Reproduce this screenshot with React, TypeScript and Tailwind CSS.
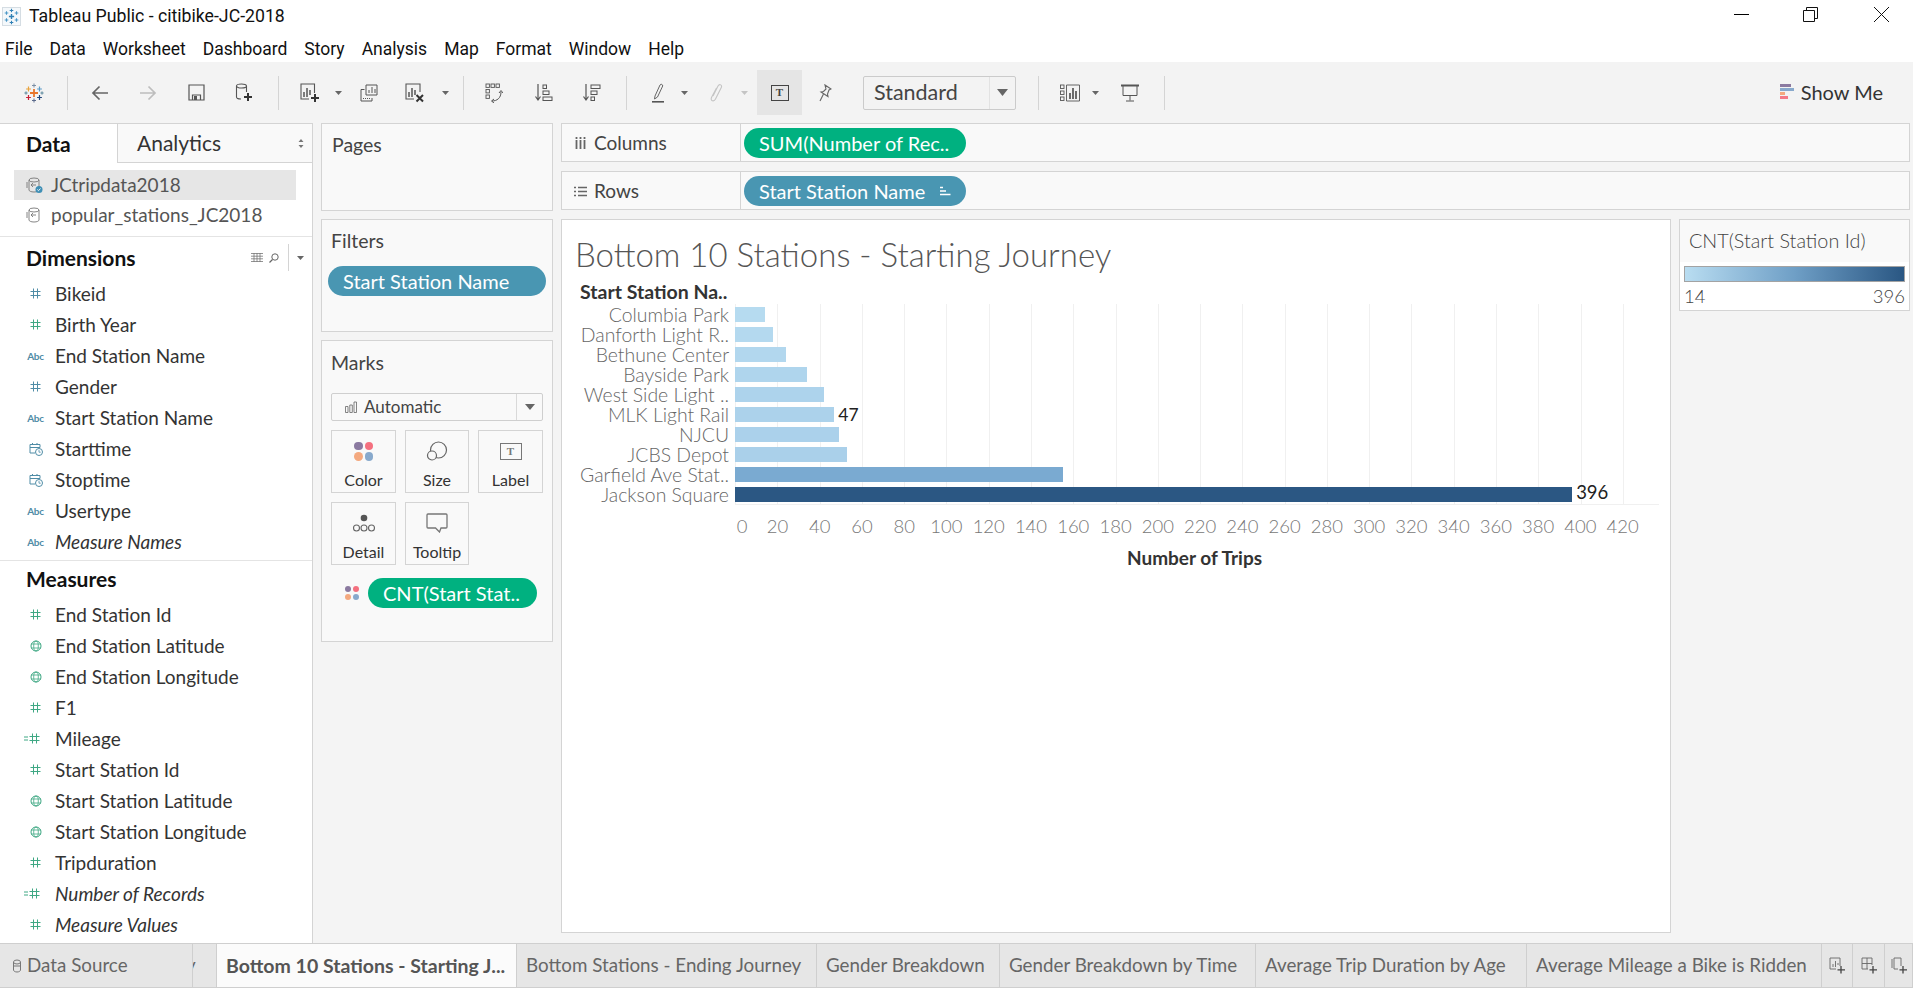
import React from "react";

const S = "#555555";

function Svg({ w = 20, h = 20, children, className = "" }: { w?: number; h?: number; children: React.ReactNode; className?: string }) {
  return (
    <svg width={w} height={h} viewBox={`0 0 ${w} ${h}`} fill="none" className={className}>
      {children}
    </svg>
  );
}

function Plus({ x, y, r, c, t = 1.4 }: { x: number; y: number; r: number; c: string; t?: number }) {
  return <path d={`M${x - r} ${y}H${x + r}M${x} ${y - r}V${y + r}`} stroke={c} strokeWidth={t} />;
}

function TableauLogo() {
  return (
    <Svg w={20} h={20}>
      <Plus x={10} y={10} r={4} c="#e8762c" t={1.8} />
      <Plus x={10} y={2.5} r={2} c="#7b8fa6" t={1} />
      <Plus x={10} y={17.5} r={2} c="#5b6b8c" t={1} />
      <Plus x={4.5} y={6} r={2.4} c="#e8a33d" t={1.2} />
      <Plus x={15.5} y={6} r={2.4} c="#5b9bc8" t={1.2} />
      <Plus x={4.5} y={14.5} r={2.4} c="#c72035" t={1.2} />
      <Plus x={15.5} y={14.5} r={2.4} c="#1f447a" t={1.2} />
      <Plus x={2} y={10} r={1.6} c="#59879b" t={1} />
      <Plus x={18} y={10} r={1.6} c="#59879b" t={1} />
    </Svg>
  );
}

function AppIcon() {
  return (
    <div className="w-[19px] h-[19px] bg-[#f4f8fb] border border-[#d5dde3] flex items-center justify-center">
      <Svg w={17} h={17}>
        <Plus x={8.5} y={8.5} r={2.6} c="#2f80b5" />
        <Plus x={8.5} y={2.5} r={1.8} c="#2f80b5" t={1.1} />
        <Plus x={8.5} y={14.5} r={1.8} c="#2f80b5" t={1.1} />
        <Plus x={3.5} y={5} r={1.8} c="#4b97c7" t={1.1} />
        <Plus x={13.5} y={5} r={1.8} c="#4b97c7" t={1.1} />
        <Plus x={3.5} y={12} r={1.8} c="#4b97c7" t={1.1} />
        <Plus x={13.5} y={12} r={1.8} c="#4b97c7" t={1.1} />
      </Svg>
    </div>
  );
}

const Caret = ({ c = "#666" }: { c?: string }) => (
  <Svg w={7} h={4}>
    <path d="M0 0H7L3.5 4Z" fill={c} />
  </Svg>
);

const Sep = () => <div className="w-px h-[34px] bg-[#d4d4d4] shrink-0" />;

function Slot({ w, children }: { w: string; children?: React.ReactNode }) {
  return <div className={`${w} h-full flex items-center justify-center shrink-0`}>{children}</div>;
}

const Back = ({ c = "#666" }: { c?: string }) => (
  <Svg w={18} h={16}>
    <path d="M17 8H2M8.5 1.5L2 8l6.5 6.5" stroke={c} strokeWidth="1.7" />
  </Svg>
);
const Fwd = () => (
  <Svg w={18} h={16}>
    <path d="M1 8h15M9.5 1.5L16 8l-6.5 6.5" stroke="#bdbdbd" strokeWidth="1.7" />
  </Svg>
);
const Save = () => (
  <Svg w={17} h={17}>
    <path d="M1 1h15V16H1Z" stroke={S} strokeWidth="1.2" />
    <path d="M4.5 16v-5h8v5" stroke={S} strokeWidth="1.2" />
    <rect x="6" y="12" width="3" height="4" fill={S} />
  </Svg>
);
const AddDs = () => (
  <Svg w={18} h={20}>
    <ellipse cx="6.5" cy="3" rx="5" ry="2" stroke={S} strokeWidth="1.1" />
    <path d="M1.5 3v11c0 1 1.800 2 4.500 2M11.500 3v6" stroke={S} strokeWidth="1.1" />
    <path d="M13 10v8M9 14h8" stroke="#333" strokeWidth="2" />
  </Svg>
);
const NewSheet = () => (
  <Svg w={20} h={20}>
    <path d="M14.500 10V1H1v15h8" stroke={S} strokeWidth="1.1" />
    <path d="M4 14V9M7 14V5M10 12V7" stroke={S} strokeWidth="1.5" />
    <path d="M15 11v8M11 15h8" stroke="#333" strokeWidth="2" />
  </Svg>
);
const Dup = () => (
  <Svg w={18} h={18}>
    <path d="M6 1h11v10H6Z" stroke={S} strokeWidth="1" />
    <path d="M9 9V6M12 9V3M15 9V5" stroke={S} strokeWidth="1" />
    <path d="M4.500 5.500H1V17h11v-3" stroke={S} strokeWidth="1" />
    <path d="M3 14.500h7" stroke={S} strokeWidth="1" strokeDasharray="1 1" />
  </Svg>
);
const Clear = () => (
  <Svg w={20} h={20}>
    <path d="M15 9V1H1v15h8" stroke={S} strokeWidth="1.1" />
    <path d="M4 14V9M7 14V5M10 12V7" stroke={S} strokeWidth="1.5" />
    <path d="M11.500 12l6.500 6.500M18 12l-6.500 6.500" stroke="#333" strokeWidth="2" />
  </Svg>
);
const Swap = () => (
  <Svg w={18} h={20}>
    {[1, 6, 11].map((x) => <rect key={x} x={x} y="1" width="3.400" height="3.400" stroke={S} strokeWidth=".9" />)}
    {[6.5, 12].map((y) => <rect key={y} x="1" y={y} width="3.400" height="3.400" stroke={S} strokeWidth=".9" />)}
    <path d="M7 18c5 0 9-3 9-9M14 10l2-2.500L18 10M9 16l-2.500 2L9 20" stroke={S} strokeWidth="1" />
  </Svg>
);
const SortA = () => (
  <Svg w={18} h={18}>
    <path d="M3 0v15M.5 12.500L3 16l2.500-3.500" stroke={S} strokeWidth="1.2" />
    <rect x="8" y="1" width="3.500" height="3.500" stroke={S} />
    <rect x="8" y="7" width="6" height="3.500" stroke={S} />
    <rect x="8" y="13" width="9" height="3.500" stroke={S} />
  </Svg>
);
const SortD = () => (
  <Svg w={18} h={18}>
    <path d="M3 0v15M.5 12.500L3 16l2.500-3.500" stroke={S} strokeWidth="1.2" />
    <rect x="8" y="1" width="9" height="3.500" stroke={S} />
    <rect x="8" y="7" width="6" height="3.500" stroke={S} />
    <rect x="8" y="13" width="3.500" height="3.500" stroke={S} />
  </Svg>
);
const Pen = () => (
  <Svg w={14} h={20}>
    <path d="M4 13L9 2c1-1.500 3-.5 2.700 1L6.500 14l-3 2Z" stroke="#666" strokeWidth="1" />
    <rect x="1" y="18" width="12" height="1.600" fill="#555" />
  </Svg>
);
const Clip = () => (
  <Svg w={14} h={20}>
    <path d="M4 13L9 3c1.500-2.500 4.500-1 3.300 1.500L6.500 16c-1.500 3-5.500 2-4-1.500L7.500 5" stroke="#c4c4c4" strokeWidth="1.100" />
  </Svg>
);
const TBox = ({ c = "#444", w = 17 }: { c?: string; w?: number }) => (
  <div className={`relative flex items-center justify-center border-[1.5px] ${w === 17 ? "w-[18px] h-[16px]" : "w-[22px] h-[17px]"}`} style={{ borderColor: c }}>
    <span className="[font-family:'Liberation_Serif',serif] text-[11px] font-bold leading-none" style={{ color: c }}>T</span>
  </div>
);
const Pin = () => (
  <Svg w={14} h={18}>
    <path d="M7 1l6 4-2 1-1.500 4 .5 2.500L3 8l2.500-.5L8 5Z" stroke="#666" strokeWidth="1.100" />
    <path d="M5.500 10L2 17" stroke="#666" strokeWidth="1.100" />
  </Svg>
);
const Cards = () => (
  <Svg w={20} h={18}>
    {[1, 7, 13].map((y) => <rect key={y} x=".5" y={y} width="3.500" height="3.500" stroke={S} strokeWidth=".9" />)}
    <path d="M6.500 1H19.500V17H6.500Z" stroke={S} strokeWidth=".9" />
    <path d="M10 15V9M13 15V4M16 15V7" stroke={S} strokeWidth="1.700" />
  </Svg>
);
const Present = () => (
  <Svg w={18} h={18}>
    <path d="M0 1.500H18" stroke={S} strokeWidth="2" />
    <path d="M2 2v9.500h14V2M9 11.500V16.500M5 17h8" stroke={S} strokeWidth="1" />
  </Svg>
);
const ShowMeIcon = () => (
  <div className="flex flex-col gap-px">
    <div className="w-[11px] h-[3px] bg-[#8b7aa0]" />
    <div className="w-[14px] h-[3px] bg-[#88a9cc]" />
    <div className="w-[5px] h-[3px] bg-[#f4a97f]" />
    <div className="w-[8px] h-[3px] bg-[#f47a87]" />
  </div>
);

const Hash = ({ c }: { c: string }) => (
  <Svg w={11} h={11}>
    <path d="M3.500 .5v10M7.500 .5v10M.5 3.500h10M.5 7.500h10" stroke={c} strokeWidth="1" />
  </Svg>
);
const BLUE = "#4f8ca6";
const GREEN = "#3fa884";

function FieldIcon({ kind, color }: { kind: string; color: string }) {
  if (kind === "hash") return <Hash c={color} />;
  if (kind === "calc")
    return (
      <div className="flex items-center gap-[1px] -ml-[7px]">
        <Svg w={4} h={5}>
          <path d="M0 1h4M0 4h4" stroke={color} strokeWidth="1" />
        </Svg>
        <Hash c={color} />
      </div>
    );
  if (kind === "abc") return <span className="text-[10px] font-bold leading-none text-[#4f8ca6] tracking-tight">Abc</span>;
  if (kind === "cal")
    return (
      <Svg w={14} h={14}>
        <path d="M6 11H1V2.500h10v3M1 5.500h10M3.500 1v2M8 1v2" stroke={BLUE} strokeWidth="1" />
        <circle cx="10" cy="10" r="3.500" stroke={BLUE} strokeWidth="1" />
        <path d="M10 8v2.200h1.700" stroke={BLUE} strokeWidth=".8" />
      </Svg>
    );
  return (
    <Svg w={12} h={12}>
      <circle cx="6" cy="6" r="5" stroke={color} strokeWidth="1" />
      <ellipse cx="6" cy="6" rx="2.300" ry="5" stroke={color} strokeWidth=".8" />
      <path d="M1 4h10M1 8h10" stroke={color} strokeWidth=".8" />
    </Svg>
  );
}

function Field({ kind, color, label, italic }: { kind: string; color: string; label: string; italic?: boolean }) {
  return (
    <div className="h-[31px] flex items-center">
      <div className="w-[55px] pl-[27px] flex items-center shrink-0">
        <div className="w-[17px] flex items-center justify-center">
          <FieldIcon kind={kind} color={color} />
        </div>
      </div>
      <span className={`text-[19px] text-[#333] leading-none whitespace-nowrap ${italic ? "italic" : ""}`}>{label}</span>
    </div>
  );
}

const dims = [
  ["hash", BLUE, "Bikeid"],
  ["hash", GREEN, "Birth Year"],
  ["abc", BLUE, "End Station Name"],
  ["hash", BLUE, "Gender"],
  ["abc", BLUE, "Start Station Name"],
  ["cal", BLUE, "Starttime"],
  ["cal", BLUE, "Stoptime"],
  ["abc", BLUE, "Usertype"],
  ["abc", BLUE, "Measure Names", 1],
] as const;

const meas = [
  ["hash", GREEN, "End Station Id"],
  ["globe", GREEN, "End Station Latitude"],
  ["globe", GREEN, "End Station Longitude"],
  ["hash", GREEN, "F1"],
  ["calc", GREEN, "Mileage"],
  ["hash", GREEN, "Start Station Id"],
  ["globe", GREEN, "Start Station Latitude"],
  ["globe", GREEN, "Start Station Longitude"],
  ["hash", GREEN, "Tripduration"],
  ["calc", GREEN, "Number of Records", 1],
  ["hash", GREEN, "Measure Values", 1],
] as const;

const DsIcon = ({ check }: { check?: boolean }) => (
  <Svg w={17} h={16}>
    <ellipse cx="8" cy="3" rx="5" ry="2" stroke="#777" strokeWidth=".9" />
    <path d="M3 3v10c0 1 2 2 5 2s5-1 5-2V3M1 5v6" stroke="#777" strokeWidth=".9" />
    <path d="M5 8h5M7 6l-2 2 2 2" stroke="#777" strokeWidth=".9" />
    {check && <circle cx="13" cy="12.500" r="3.500" fill="#3f8fb5" />}
    {check && <path d="M11.300 12.500l1.200 1.200 2-2.200" stroke="#fff" strokeWidth=".9" />}
  </Svg>
);

function LeftPane() {
  return (
    <div className="w-[313px] shrink-0 bg-white border-t border-r border-[#d4d4d4] flex flex-col">
      <div className="h-[39px] flex shrink-0">
        <div className="w-[117px] pl-[26px] flex items-center text-[21px] font-bold text-[#111]">Data</div>
        <div className="flex-1 bg-[#f9f9f9] border-l border-b border-[#d4d4d4] flex items-center pl-[19px] pr-[8px] justify-between">
          <span className="text-[21px] text-[#333]">Analytics</span>
          <Svg w={6} h={9}>
            <path d="M3 0l2.500 3h-5ZM3 9l2.500-3h-5Z" fill="#777" />
          </Svg>
        </div>
      </div>
      <div className="mt-[7px] h-[67px] border-b border-[#e4e4e4] shrink-0 pl-[14px]">
        <div className="w-[282px] h-[30px] bg-[#e6e6e6] flex items-center pl-[12px] gap-[8px] text-[19px] text-[#555]">
          <DsIcon check />
          <span>JCtripdata2018</span>
        </div>
        <div className="w-[282px] h-[30px] flex items-center pl-[12px] gap-[8px] text-[19px] text-[#555]">
          <DsIcon />
          <span>popular_stations_JC2018</span>
        </div>
      </div>
      <div className="h-[41px] shrink-0 pl-[26px] pr-[8px] flex items-center justify-between">
        <span className="text-[21px] font-bold text-[#111]">Dimensions</span>
        <div className="flex items-center h-[27px]">
          <Svg w={12} h={9}>
            <path d="M0 .5h12M0 3.200h12M0 5.800h12M0 8.500h12M3 0v9M6 0v9M9 0v9" stroke="#777" strokeWidth=".8" />
          </Svg>
          <div className="w-[21px] flex justify-center">
            <Svg w={10} h={10}>
              <circle cx="6" cy="4" r="3.200" stroke="#666" strokeWidth="1" />
              <path d="M3.500 6.500L.5 9.500" stroke="#666" strokeWidth="1.200" />
            </Svg>
          </div>
          <div className="w-px h-[27px] bg-[#d4d4d4] ml-[4px] mr-[8px]" />
          <Caret />
        </div>
      </div>
      <div className="shrink-0">
        {dims.map((d) => (
          <Field key={d[2]} kind={d[0]} color={d[1]} label={d[2]} italic={d.length > 3} />
        ))}
      </div>
      <div className="h-[39px] shrink-0 mt-[3px] border-t border-[#e4e4e4] pl-[26px] pb-[3px] flex items-center text-[21px] font-bold text-[#111]">Measures</div>
      <div className="shrink-0">
        {meas.map((d) => (
          <Field key={d[2]} kind={d[0]} color={d[1]} label={d[2]} italic={d.length > 3} />
        ))}
      </div>
    </div>
  );
}

const Dots = ({ size }: { size: string }) => (
  <div className={`grid grid-cols-2 gap-[2px] ${size}`}>
    <div className="rounded-full bg-[#8b7aa0]" />
    <div className="rounded-full bg-[#f4707f]" />
    <div className="rounded-full bg-[#f4a97f]" />
    <div className="rounded-full bg-[#88a9cc]" />
  </div>
);

function MarkBtn({ label, icon }: { label: string; icon: React.ReactNode }) {
  return (
    <div className="h-[63px] border border-[#d4d4d4] flex flex-col items-center">
      <div className="h-[36px] flex items-center justify-center pt-[4px]">{icon}</div>
      <span className="text-[16px] text-[#333] leading-none mt-[5px]">{label}</span>
    </div>
  );
}

function CardsPane() {
  return (
    <div className="w-[232px] shrink-0 ml-[8px] flex flex-col">
      <div className="h-[88px] border border-[#d4d4d4] bg-[#f9f9f9] pl-[10px] pt-[10px] text-[19.500px] text-[#444] leading-[22px]">Pages</div>
      <div className="h-[113px] mt-[8px] border border-[#d4d4d4] bg-[#f9f9f9] px-[6px]">
        <div className="pl-[3px] pt-[10px] text-[19.500px] text-[#444] leading-[22px]">Filters</div>
        <div className="mt-[14px] h-[30px] rounded-full bg-[#4996b2] text-white text-[20px] flex items-center pl-[15px]">Start Station Name</div>
      </div>
      <div className="h-[302px] mt-[8px] border border-[#d4d4d4] bg-[#f9f9f9] px-[9px]">
        <div className="pt-[11px] text-[19.500px] text-[#444] leading-[22px]">Marks</div>
        <div className="mt-[19px] h-[28px] border border-[#cfcfcf] rounded-[2px] flex items-center">
          <div className="flex-1 flex items-center pl-[13px] gap-[7px] text-[17px] text-[#444]">
            <Svg w={12} h={12}>
              <path d="M.5 5.500h2.500v6H.5ZM4.800 4h2.500v7.500H4.800ZM9 1h2.500v10.500H9Z" stroke="#666" strokeWidth=".8" />
            </Svg>
            <span>Automatic</span>
          </div>
          <div className="w-[26px] h-full border-l border-[#d9d9d9] flex items-center justify-center">
            <Svg w={10} h={6}>
              <path d="M0 0H10L5 6Z" fill="#666" />
            </Svg>
          </div>
        </div>
        <div className="mt-[9px] grid grid-cols-[65px_64px_65px] gap-x-[9px] gap-y-[9px]">
          <MarkBtn label="Color" icon={<Dots size="w-[19px] h-[19px]" />} />
          <MarkBtn
            label="Size"
            icon={
              <Svg w={22} h={20}>
                <circle cx="12.500" cy="9" r="8" stroke="#666" strokeWidth="1.200" />
                <circle cx="6" cy="14.500" r="4.500" fill="#f9f9f9" stroke="#666" strokeWidth="1.200" />
              </Svg>
            }
          />
          <MarkBtn label="Label" icon={<TBox c="#777" w={21} />} />
          <MarkBtn
            label="Detail"
            icon={
              <Svg w={24} h={19}>
                <circle cx="12" cy="4" r="3.300" fill="#555" />
                <circle cx="4.500" cy="14" r="3" stroke="#666" strokeWidth="1.100" />
                <circle cx="12" cy="14" r="3" stroke="#666" strokeWidth="1.100" />
                <circle cx="19.500" cy="14" r="3" stroke="#666" strokeWidth="1.100" />
              </Svg>
            }
          />
          <MarkBtn
            label="Tooltip"
            icon={
              <Svg w={22} h={20}>
                <path d="M2 1h18a1 1 0 0 1 1 1v12a1 1 0 0 1-1 1h-5l-1.500 4-4-4H2a1 1 0 0 1-1-1V2a1 1 0 0 1 1-1Z" stroke="#777" strokeWidth="1.300" />
              </Svg>
            }
          />
        </div>
        <div className="mt-[13px] flex items-center pl-[14px]">
          <Dots size="w-[14px] h-[14px]" />
          <div className="ml-[9px] w-[169px] h-[30px] rounded-full bg-[#00b180] text-white text-[20px] flex items-center pl-[15px] whitespace-nowrap">CNT(Start Stat..</div>
        </div>
      </div>
    </div>
  );
}

function Shelf({ icon, label, pill, color, sort }: { icon: React.ReactNode; label: string; pill: string; color: string; sort?: boolean }) {
  return (
    <div className="h-[39px] border border-[#d4d4d4] bg-[#f9f9f9] flex items-center">
      <div className="w-[179px] h-full border-r border-[#d4d4d4] flex items-center shrink-0 pt-px">
        <div className="w-[32px] flex justify-center pl-[5px]">{icon}</div>
        <span className="text-[19px] text-[#444]">{label}</span>
      </div>
      <div className={`ml-[3px] w-[222px] h-[30px] rounded-full ${color} text-white text-[20px] flex items-center pl-[15px] pr-[15px] justify-between whitespace-nowrap`}>
        <span>{pill}</span>
        {sort && (
          <Svg w={11} h={10}>
            <path d="M0 1.500h3M0 5h6M0 8.500h10.500" stroke="#fff" strokeWidth="1.500" />
          </Svg>
        )}
      </div>
    </div>
  );
}

const rows: [string, number, string][] = [
  ["Columbia Park", 14, "#b6dbf0"],
  ["Danforth Light R..", 18, "#b4d9ef"],
  ["Bethune Center", 24, "#b2d7ee"],
  ["Bayside Park", 34, "#afd5ed"],
  ["West Side Light ..", 42, "#add3ec"],
  ["MLK Light Rail", 47, "#acd2eb"],
  ["NJCU", 49, "#abd1eb"],
  ["JCBS Depot", 53, "#aad0ea"],
  ["Garfield Ave Stat..", 155, "#7aaad1"],
  ["Jackson Square", 396, "#2b5783"],
];
const PX = 2.114;
const ticks = Array.from({ length: 22 }, (_, i) => i * 20);

function Chart() {
  return (
    <div className="w-[1110px] shrink-0 bg-white border border-[#d4d4d4] overflow-hidden">
      <div className="h-[54px] pl-[13px] pt-[15px] text-[33px] leading-[38px] font-light text-[#555] whitespace-nowrap">Bottom 10 Stations - Starting Journey</div>
      <div className="h-[30px] pt-[6px] flex items-center">
        <div className="ml-[18px] text-[19.500px] font-bold text-[#333] whitespace-nowrap">Start Station Na..</div>
      </div>
      <div className="relative h-[201px] w-[1096px]">
        <svg className="absolute left-[173px] top-0" width="924" height="201">
          {ticks.map((t) => (
            <line key={t} x1={Math.round(t * PX) + 0.5} x2={Math.round(t * PX) + 0.5} y1="0" y2="201" stroke="#f0f0f0" />
          ))}
          <line x1="0" x2="924" y1="200.500" y2="200.500" stroke="#f0f0f0" />
        </svg>
        <div className="relative">
          {rows.map(([l, v, c]) => (
            <div key={l} className="h-[20px] pt-px flex items-center">
              <div className="w-[167px] text-right text-[19.400px] font-light text-[#666] whitespace-nowrap leading-none shrink-0">{l}</div>
              <div className="ml-[6px] h-[15px]" style={{ width: v * PX, backgroundColor: c }} />
              {v === 47 && <span className="ml-[4px] text-[17.500px] text-[#222] leading-none">47</span>}
              {v === 396 && <span className="ml-[4px] -mt-[4px] text-[18.500px] text-[#222] leading-none">396</span>}
            </div>
          ))}
        </div>
      </div>
      <div className="flex h-[39px] pt-[4px] items-center pl-[152px]">
        {ticks.map((t) => (
          <div key={t} className={`w-[42.280px] text-center shrink-0 text-[18.500px] text-[#777] font-light ${t === 0 ? "pl-[14px]" : ""}`}>{t}</div>
        ))}
      </div>
      <div className="h-[26px] pt-[2px] flex items-center pl-[565px]">
        <span className="text-[19px] font-bold text-[#333]">Number of Trips</span>
      </div>
    </div>
  );
}

function Legend() {
  return (
    <div className="w-[231px] h-[92px] shrink-0 ml-[8px] border border-[#d4d4d4] bg-white">
      <div className="h-[42px] bg-[#f9f9f9] pl-[9px] flex items-center text-[19.800px] text-[#444] font-light whitespace-nowrap">CNT(Start Station Id)</div>
      <div className="mx-[4px] mt-[4px] h-[16px] border border-[#a3a3a3] bg-gradient-to-r from-[#b9ddf1] via-[#6f9fc6] to-[#2a5783]" />
      <div className="mx-[4px] flex justify-between text-[18.500px] text-[#444] font-light leading-[28px]">
        <span>14</span>
        <span>396</span>
      </div>
    </div>
  );
}

function Tab({ w, label, active, icon, pl = "pl-[10px]" }: { w: string; label?: string; active?: boolean; icon?: React.ReactNode; pl?: string }) {
  return (
    <div className={`${w} ${pl} h-full border-r border-[#cfcfcf] overflow-hidden flex items-center shrink-0 whitespace-nowrap ${active ? "bg-[#fbfbfb] font-bold text-[#555] text-[19.500px]" : "text-[#666] text-[18.800px]"}`}>
      {icon}
      {label}
    </div>
  );
}

const TabAdd = ({ kind }: { kind: number }) => (
  <Svg w={17} h={17}>
    {kind === 0 && <path d="M11 9V1H1v11h6M4 10V7M6.500 10V4M9 8V6" stroke="#666" strokeWidth=".9" />}
    {kind === 1 && <path d="M11 8V1H1v11h6M1 6.500h10M6 1v11" stroke="#666" strokeWidth=".9" />}
    {kind === 2 && <path d="M3 1h7v8M3 1v11h4M1 2v9" stroke="#666" strokeWidth=".9" />}
    <path d="M12 9v7.500M8.500 12.800h7.500" stroke="#444" strokeWidth="1.300" />
  </Svg>
);

export default function App() {
  return (
    <div className="w-[1913px] h-[988px] flex flex-col overflow-hidden bg-[#f4f4f4] [font-family:Lato,sans-serif]">
      <div className="h-[32px] bg-white flex items-center shrink-0 pl-[2px] [font-family:Roboto,sans-serif]">
        <AppIcon />
        <span className="ml-[8px] text-[17.700px] text-[#111] whitespace-nowrap">Tableau Public - citibike-JC-2018</span>
        <div className="ml-auto flex items-center h-full pb-[3px]">
          <div className="w-[59px] flex justify-center">
            <div className="w-[15px] h-px bg-black" />
          </div>
          <div className="w-[78px] flex justify-center">
            <Svg w={15} h={15}>
              <path d="M3.500 3.500V.5H14.500V11.500H11.500M.5 3.500H11.500V14.500H.5Z" stroke="#111" />
            </Svg>
          </div>
          <div className="w-[64px] flex justify-center">
            <Svg w={15} h={15}>
              <path d="M0 0L15 15M15 0L0 15" stroke="#111" />
            </Svg>
          </div>
        </div>
      </div>
      <div className="h-[30px] bg-white flex items-center shrink-0 pl-[5px] pt-[4px] text-[17.500px] text-[#111] gap-[17px] [font-family:Roboto,sans-serif]">
        {["File", "Data", "Worksheet", "Dashboard", "Story", "Analysis", "Map", "Format", "Window", "Help"].map((m) => (
          <span key={m}>{m}</span>
        ))}
      </div>
      <div className="h-[58px] shrink-0 pt-[3px] flex items-center bg-[#f3f3f3]">
        <Slot w="w-[67px]"><TableauLogo /></Slot>
        <Sep />
        <Slot w="w-[8px]" />
        <Slot w="w-[48px]"><Back /></Slot>
        <Slot w="w-[48px]"><Fwd /></Slot>
        <Slot w="w-[48px]"><Save /></Slot>
        <Slot w="w-[48px]"><AddDs /></Slot>
        <Slot w="w-[10px]" />
        <Sep />
        <Slot w="w-[11px]" />
        <Slot w="w-[40px]"><NewSheet /></Slot>
        <Slot w="w-[16px]"><Caret /></Slot>
        <Slot w="w-[46px]"><Dup /></Slot>
        <Slot w="w-[46px]"><Clear /></Slot>
        <Slot w="w-[15px]"><Caret /></Slot>
        <Slot w="w-[10px]" />
        <Sep />
        <Slot w="w-[60px]"><Swap /></Slot>
        <Slot w="w-[40px]"><SortA /></Slot>
        <Slot w="w-[56px]"><SortD /></Slot>
        <Slot w="w-[6px]" />
        <Sep />
        <Slot w="w-[62px]"><Pen /></Slot>
        <div className="-ml-[14px] w-[18px] flex justify-center"><Caret /></div>
        <div className="ml-[7px] w-[32px] flex justify-center"><Clip /></div>
        <div className="w-[24px] flex justify-center"><Caret c="#c4c4c4" /></div>
        <div className="ml-[1px] w-[45px] h-[45px] bg-[#e5e5e5] flex items-center justify-center"><TBox /></div>
        <div className="w-[45px] flex justify-center"><Pin /></div>
        <div className="ml-[16px] w-[153px] h-[34px] border border-[#cbcbcb] rounded-[2px] flex items-center text-[21.500px] text-[#444]">
          <div className="flex-1 pl-[10px]">Standard</div>
          <div className="w-[26px] h-full border-l border-[#e2e2e2] flex items-center justify-center">
            <Svg w={11} h={7}>
              <path d="M0 0H11L5.500 7Z" fill="#666" />
            </Svg>
          </div>
        </div>
        <div className="w-[22px]" />
        <Sep />
        <div className="ml-[20px] w-[22px] flex justify-center"><Cards /></div>
        <div className="ml-[6px] w-[16px] flex justify-center"><Caret /></div>
        <div className="ml-[16px] w-[22px] flex justify-center"><Present /></div>
        <div className="w-[23px]" />
        <Sep />
        <div className="ml-auto flex items-center gap-[7px] pr-[30px] pb-[2px]">
          <ShowMeIcon />
          <span className="text-[20px] text-[#333]">Show Me</span>
        </div>
      </div>
      <div className="flex-1 min-h-0 pt-[3px] flex items-start bg-[#f4f4f4]">
        <div className="self-stretch flex"><LeftPane /></div>
        <CardsPane />
        <div className="ml-[8px] w-[1349px] shrink-0 flex flex-col">
          <Shelf
            label="Columns"
            pill="SUM(Number of Rec.."
            color="bg-[#00b180]"
            icon={
              <Svg w={11} h={12}>
                <path d="M1.500 3v9M5.500 3v9M9.500 3v9M1.500 0v2M5.500 0v2M9.500 0v2" stroke="#666" strokeWidth="1.800" />
              </Svg>
            }
          />
          <div className="mt-[9px]">
            <Shelf
              label="Rows"
              pill="Start Station Name"
              color="bg-[#4996b2]"
              sort
              icon={
                <Svg w={13} h={11}>
                  <path d="M0 1.500h2M4 1.500h9M0 5.500h2M4 5.500h9M0 9.500h2M4 9.500h9" stroke="#666" strokeWidth="1.600" />
                </Svg>
              }
            />
          </div>
          <div className="mt-[9px] flex h-[714px] items-start">
            <div className="self-stretch flex"><Chart /></div>
            <Legend />
          </div>
        </div>
      </div>
      <div className="h-[45px] shrink-0 border-t border-b border-[#cfcfcf] bg-[#e6e6e6] flex items-center">
        <Tab
          w="w-[193px]"
          pl="pl-[12px]"
          label="Data Source"
          icon={
            <Svg w={15} h={14} className="shrink-0">
              <ellipse cx="5" cy="3" rx="3.500" ry="2" stroke="#777" />
              <path d="M1.500 3v8c0 1 1.500 2 3.500 2s3.500-1 3.500-2V3M1.500 7h7" stroke="#777" />
            </Svg>
          }
        />
        <Tab w="w-[24px]" pl="pl-0" icon={<span className="-ml-[7px]">y</span>} />
        <Tab w="w-[300px]" pl="pl-[9px]" label="Bottom 10 Stations - Starting J..." active />
        <Tab w="w-[300px]" pl="pl-[9px]" label="Bottom Stations - Ending Journey" />
        <Tab w="w-[183px]" pl="pl-[9px]" label="Gender Breakdown" />
        <Tab w="w-[256px]" pl="pl-[9px]" label="Gender Breakdown by Time" />
        <Tab w="w-[271px]" pl="pl-[9px]" label="Average Trip Duration by Age" />
        <Tab w="w-[295px]" pl="pl-[9px]" label="Average Mileage a Bike is Ridden" />
        <Tab w="w-[31px]" pl="pl-[7px]" icon={<TabAdd kind={0} />} />
        <Tab w="w-[32px]" pl="pl-[8px]" icon={<TabAdd kind={1} />} />
        <Tab w="w-[28px]" pl="pl-[6px]" icon={<TabAdd kind={2} />} />
      </div>
    </div>
  );
}
